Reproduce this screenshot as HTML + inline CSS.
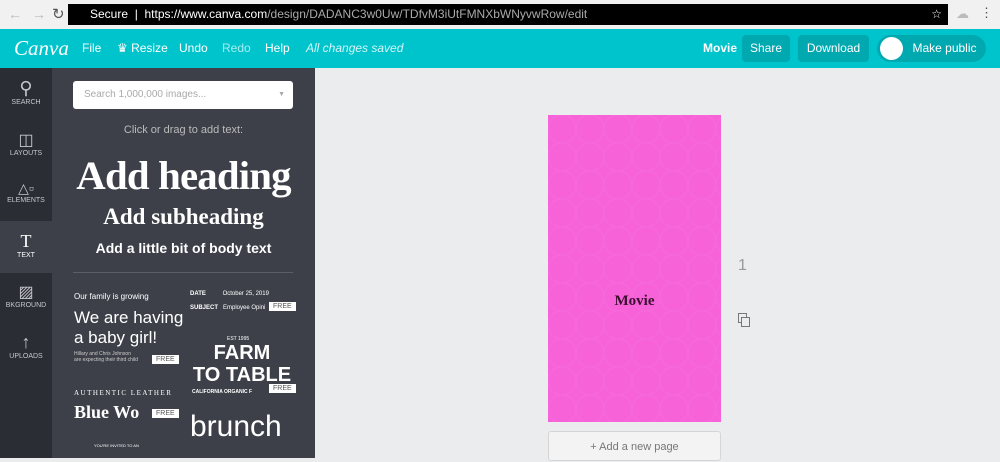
<!DOCTYPE html>
<html><head><style>
*{margin:0;padding:0;box-sizing:border-box}
body{width:1000px;height:458px;overflow:hidden;font-family:"Liberation Sans",sans-serif;background:#ebeced;position:relative}
.a{position:absolute}
.chrome{left:0;top:0;width:1000px;height:29px;background:#f1f1f1}
.url{left:68px;top:4px;width:880px;height:21px;background:#000;color:#fff;font-size:12px;line-height:21px;padding-left:22px}
.top{left:0;top:29px;width:1000px;height:39px;background:#00c4cc;color:#fff;font-size:13px}
.top span{position:absolute;top:12px}
.btn{position:absolute;top:6px;height:27px;background:#00a9b0;border-radius:4px;line-height:27px;text-align:center;font-size:12px}
.rail{left:0;top:68px;width:52px;height:390px;background:#2a2d33}
.panel{left:52px;top:68px;width:263px;height:390px;background:#3d4049}
.ri{position:absolute;left:0;width:52px;text-align:center;color:#c5c7cc;font-size:7px}
.free{position:absolute;background:#fff;color:#555;font-size:7px;padding:1px 4px}
.w{color:#fff;position:absolute}
</style></head><body>
<div class="a chrome">
 <div class="a" style="left:8px;top:6px;color:#bbb;font-size:14px">←</div>
 <div class="a" style="left:32px;top:6px;color:#bbb;font-size:14px">→</div>
 <div class="a" style="left:52px;top:5px;color:#555;font-size:15px">↻</div>
 <div class="a url">Secure &nbsp;| &nbsp;https://www.canva.com<span style="color:#aaa">/design/DADANC3w0Uw/TDfvM3iUtFMNXbWNyvwRow/edit</span><span style="position:absolute;right:6px">☆</span></div>
 <div class="a" style="left:956px;top:6px;color:#bbb;font-size:13px">☁</div>
 <div class="a" style="left:980px;top:5px;color:#555;font-size:13px">⋮</div>
</div>
<div class="a top">
 <span style="left:14px;top:7px;font-family:'Liberation Serif',serif;font-style:italic;font-size:21px">Canva</span>
 <span style="left:82px;font-size:12px">File</span>
 <span style="left:117px;font-size:12px">♛ Resize</span>
 <span style="left:179px;font-size:12px">Undo</span>
 <span style="left:222px;color:#a6eef0;font-size:12px">Redo</span>
 <span style="left:265px;font-size:12px">Help</span>
 <span style="left:306px;font-style:italic;color:#d5f6f7;font-size:12px">All changes saved</span>
 <span style="left:703px;font-weight:bold;font-size:12px">Movie</span>
 <div class="btn" style="left:742px;width:48px">Share</div>
 <div class="btn" style="left:798px;width:71px">Download</div>
 <div class="btn" style="left:877px;width:109px;border-radius:14px;padding-left:26px">Make public</div>
 <div class="a" style="left:880px;top:8px;width:23px;height:23px;border-radius:50%;background:#fff"></div>
</div>
<div class="a rail">
 <div class="ri" style="top:10px"><div style="font-size:18px">⚲</div>SEARCH</div>
 <div class="ri" style="top:62px"><div style="font-size:16px">◫</div>LAYOUTS</div>
 <div class="ri" style="top:112px"><div style="font-size:14px">△▫</div>ELEMENTS</div>
 <div class="ri" style="top:153px;height:52px;background:#3d4049;color:#fff;padding-top:10px"><div style="font-size:18px;font-family:'Liberation Serif'">T</div>TEXT</div>
 <div class="ri" style="top:214px"><div style="font-size:16px">▨</div>BKGROUND</div>
 <div class="ri" style="top:264px"><div style="font-size:18px">↑</div>UPLOADS</div>
</div>
<div class="a panel">
 <div class="a" style="left:21px;top:13px;width:220px;height:28px;background:#fff;border-radius:3px;color:#aaa;font-size:10px;line-height:28px;padding-left:11px">Search 1,000,000 images...<span style="position:absolute;right:8px;font-size:7px">▼</span></div>
 <div class="w" style="left:0;width:263px;text-align:center;top:56px;color:#bbb;font-size:11px">Click or drag to add text:</div>
 <div class="w" style="left:0;width:263px;text-align:center;top:84px;font-family:'Liberation Serif',serif;font-weight:bold;font-size:40px;letter-spacing:-0.8px;transform:scaleX(1.02)">Add heading</div>
 <div class="w" style="left:0;width:263px;text-align:center;top:136px;font-family:'Liberation Serif',serif;font-weight:bold;font-size:23px">Add subheading</div>
 <div class="w" style="left:0;width:263px;text-align:center;top:172px;font-size:14px;font-weight:bold">Add a little bit of body text</div>
 <div class="a" style="left:21px;top:204px;width:220px;height:1px;background:#5a5e67"></div>
 <div class="w" style="left:22px;top:224px;font-size:8px">Our family is growing</div>
 <div class="w" style="left:22px;top:240px;font-size:17px;line-height:20px">We are having<br>a baby girl!</div>
 <div class="w" style="left:22px;top:283px;font-size:5px;color:#ccc">Hillary and Chris Johnson<br>are expecting their third child</div>
 <div class="free" style="left:100px;top:287px">FREE</div>
 <div class="w" style="left:22px;top:321px;font-size:7px;letter-spacing:1.5px;font-family:'Liberation Serif'">AUTHENTIC LEATHER</div>
 <div class="w" style="left:22px;top:334px;font-size:18px;font-weight:bold;font-family:'Liberation Serif'">Blue Wo</div>
 <div class="free" style="left:100px;top:341px">FREE</div>
 <div class="w" style="left:42px;top:375px;font-size:4px">YOU'RE INVITED TO AN</div>
 <div class="w" style="left:138px;top:223px;font-size:6px;font-weight:bold">DATE &nbsp;&nbsp;&nbsp;&nbsp;&nbsp;&nbsp;&nbsp;&nbsp;&nbsp;<span style="font-weight:normal">October 25, 2019</span></div>
 <div class="w" style="left:138px;top:237px;font-size:6px;font-weight:bold">SUBJECT &nbsp;&nbsp;<span style="font-weight:normal">Employee Opini</span></div>
 <div class="free" style="left:217px;top:234px">FREE</div>
 <div class="w" style="left:175px;top:268px;font-size:5px">EST 1995</div>
 <div class="w" style="left:140px;top:274px;width:100px;text-align:center;font-size:20px;font-weight:bold;line-height:22px">FARM<br>TO TABLE</div>
 <div class="w" style="left:140px;top:321px;font-size:5px;font-weight:bold">CALIFORNIA ORGANIC F</div>
 <div class="free" style="left:217px;top:316px">FREE</div>
 <div class="w" style="left:138px;top:342px;font-size:30px">brunch</div>
</div>
<div class="a" style="left:548px;top:115px;width:173px;height:307px;background:#f762d8;background-image:radial-gradient(circle at 50% 50%,transparent 13px,rgba(255,255,255,.06) 14px,transparent 15px);background-size:28px 28px"></div>
<div class="a" style="left:548px;top:293px;width:173px;text-align:center;font-family:'Liberation Serif',serif;font-weight:bold;font-size:15px;color:#3a1030">Movie</div>
<div class="a" style="left:738px;top:257px;color:#999;font-size:16px">1</div>
<div class="a" style="left:738px;top:313px;width:9px;height:10px;border:1px solid #777"></div>
<div class="a" style="left:741px;top:317px;width:9px;height:10px;border:1px solid #777;background:#ebeced"></div>
<div class="a" style="left:548px;top:431px;width:173px;height:30px;background:#f3f3f4;border:1px solid #d5d5d5;border-radius:3px;text-align:center;color:#777;font-size:11px;line-height:30px">+ Add a new page</div>
</body></html>
